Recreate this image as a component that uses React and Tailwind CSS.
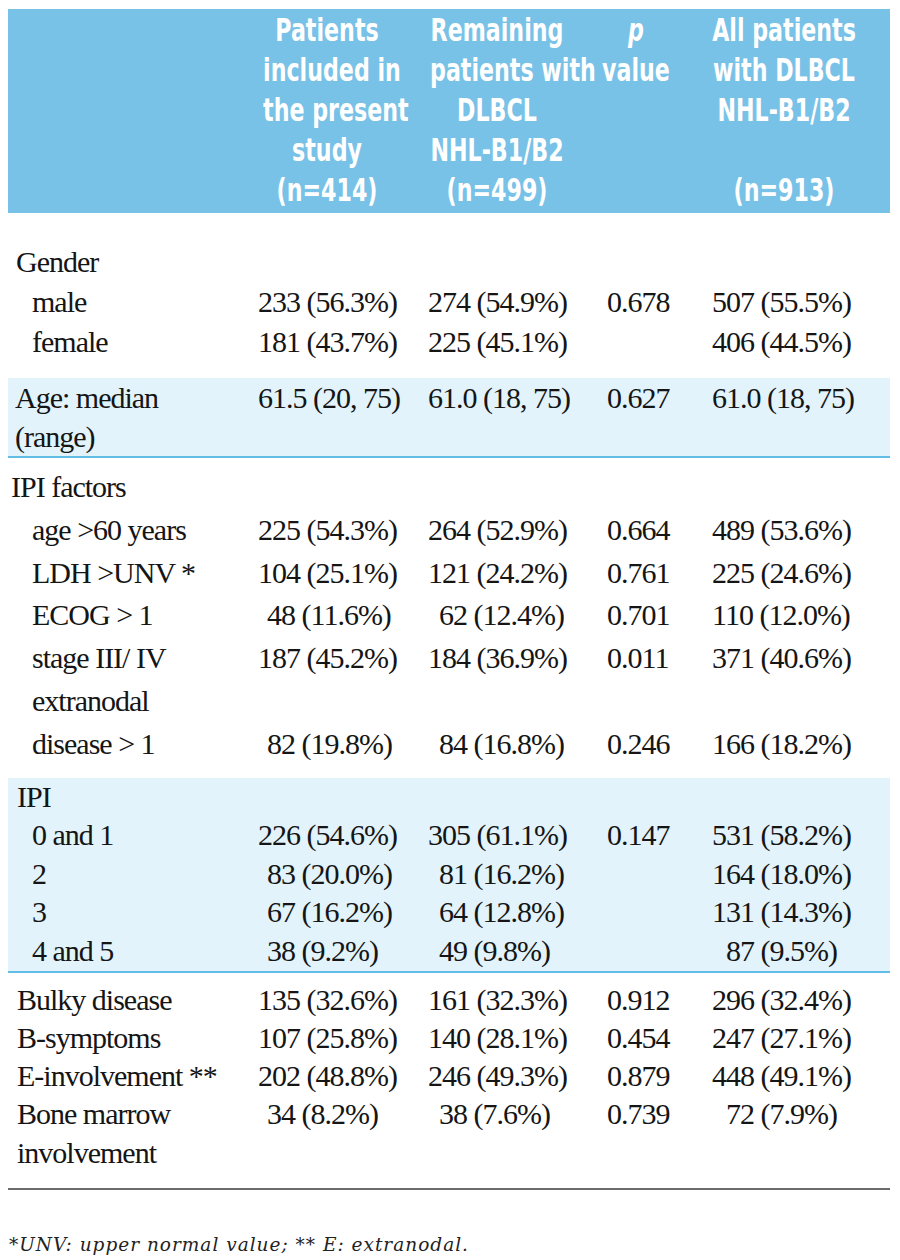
import React from 'react';

const head = [
  { lines: [] },
  { lines: ['Patients', 'included in', 'the present', 'study', '(n=414)'] },
  { lines: ['Remaining', 'patients with', 'DLBCL', 'NHL-B1/B2', '(n=499)'] },
  { lines: ['p', 'value'], italicFirst: true },
  { lines: ['All patients', 'with DLBCL', 'NHL-B1/B2', '\u00a0', '(n=913)'] },
];

// padding for values whose first number has only two digits, per value column
const shortPad = ['pl-[9px]', 'pl-[11px]', '', 'pl-[14px]'];

const sections = [
  {
    box: 'pt-[29px] pb-[17px] leading-[40px]',
    rows: [
      { label: ['Gender'], ind: 'pl-[8px]' },
      { label: ['male'], ind: 'pl-[24px]', vals: ['233 (56.3%)', '274 (54.9%)', '0.678', '507 (55.5%)'] },
      { label: ['female'], ind: 'pl-[24px]', vals: ['181 (43.7%)', '225 (45.1%)', '', '406 (44.5%)'] },
    ],
  },
  {
    box: 'bg-[#e2f3fb] border-b-2 border-[#62bde6] leading-[39px] -mt-[1px]',
    rows: [
      { label: ['Age: median', '(range)'], ind: 'pl-[7px]', vals: ['61.5 (20, 75)', '61.0 (18, 75)', '0.627', '61.0 (18, 75)'] },
    ],
  },
  {
    box: 'pt-[8px] pb-[12px] leading-[42.8px]',
    rows: [
      { label: ['IPI factors'], ind: 'pl-[3px]' },
      { label: ['age >60 years'], ind: 'pl-[24px]', vals: ['225 (54.3%)', '264 (52.9%)', '0.664', '489 (53.6%)'] },
      { label: ['LDH >UNV *'], ind: 'pl-[24px]', vals: ['104 (25.1%)', '121 (24.2%)', '0.761', '225 (24.6%)'] },
      { label: ['ECOG > 1'], ind: 'pl-[24px]', vals: ['48 (11.6%)', '62 (12.4%)', '0.701', '110 (12.0%)'], short: [0, 1] },
      { label: ['stage III/ IV'], ind: 'pl-[24px]', vals: ['187 (45.2%)', '184 (36.9%)', '0.011', '371 (40.6%)'] },
      { label: ['extranodal'], ind: 'pl-[24px]' },
      { label: ['disease > 1'], ind: 'pl-[24px]', vals: ['82 (19.8%)', '84 (16.8%)', '0.246', '166 (18.2%)'], short: [0, 1] },
    ],
  },
  {
    box: 'bg-[#e2f3fb] border-b-2 border-[#62bde6] leading-[38.6px]',
    rows: [
      { label: ['IPI'], ind: 'pl-[9px]' },
      { label: ['0 and 1'], ind: 'pl-[24px]', vals: ['226 (54.6%)', '305 (61.1%)', '0.147', '531 (58.2%)'] },
      { label: ['2'], ind: 'pl-[24px]', vals: ['83 (20.0%)', '81 (16.2%)', '', '164 (18.0%)'], short: [0, 1] },
      { label: ['3'], ind: 'pl-[24px]', vals: ['67 (16.2%)', '64 (12.8%)', '', '131 (14.3%)'], short: [0, 1] },
      { label: ['4 and 5'], ind: 'pl-[24px]', vals: ['38 (9.2%)', '49 (9.8%)', '', '87 (9.5%)'], short: [0, 1, 3] },
    ],
  },
  {
    box: 'pt-[8px] pb-[16px] leading-[38.3px] border-b-2 border-[#6b6b6b]',
    rows: [
      { label: ['Bulky disease'], ind: 'pl-[9px]', vals: ['135 (32.6%)', '161 (32.3%)', '0.912', '296 (32.4%)'] },
      { label: ['B-symptoms'], ind: 'pl-[9px]', vals: ['107 (25.8%)', '140 (28.1%)', '0.454', '247 (27.1%)'] },
      { label: ['E-involvement **'], ind: 'pl-[9px]', vals: ['202 (48.8%)', '246 (49.3%)', '0.879', '448 (49.1%)'] },
      { label: ['Bone marrow', 'involvement'], ind: 'pl-[9px]', vals: ['34 (8.2%)', '38 (7.6%)', '0.739', '72 (7.9%)'], short: [0, 1, 3] },
    ],
  },
];

function Row({ row }) {
  const vals = row.vals || ['', '', '', ''];
  return (
    <div className="grid grid-cols-[250px_170px_179px_105px_1fr]">
      <div className={row.ind}>
        {row.label.map((l, i) => (
          <div key={i} className="whitespace-nowrap">{l}</div>
        ))}
      </div>
      {vals.map((v, i) => (
        <div
          key={i}
          className={`whitespace-nowrap ${row.short && row.short.includes(i) ? shortPad[i] : ''}`}
        >
          {v || '\u00a0'}
        </div>
      ))}
    </div>
  );
}

export default function App() {
  return (
    <div className="min-h-[1260px] bg-white pt-[9px]">
      <div className="ml-[8px] w-[882px]">
        <div className="bg-[#79c2e7] pt-[1px] pb-[3px] text-white font-bold text-[32px] leading-[40px] font-['DejaVu_Sans_Condensed','Liberation_Sans',sans-serif] font-stretch-condensed">
          <div className="grid grid-cols-[236px_166px_174px_104px_192px_1fr]">
            {head.map((h, i) => (
              <div key={i} className="text-center whitespace-nowrap">
                <div className="scale-x-[0.77]">
                  {h.lines.map((l, j) => (
                    <div key={j} className={h.italicFirst && j === 0 ? 'italic' : ''}>
                      {l}
                    </div>
                  ))}
                </div>
              </div>
            ))}
          </div>
        </div>

        <div className="text-[#151515] text-[30px] tracking-[-1px] font-['Liberation_Serif','Times_New_Roman',serif]">
          {sections.map((s, i) => (
            <div key={i} className={s.box}>
              {s.rows.map((r, j) => (
                <Row key={j} row={r} />
              ))}
            </div>
          ))}
        </div>

        <p className="mt-[41px] pl-[1px] text-[18.5px] italic text-[#222] tracking-[1px] font-['DejaVu_Serif','Liberation_Serif',serif]">
          *UNV: upper normal value; ** E: extranodal.
        </p>
      </div>
    </div>
  );
}
